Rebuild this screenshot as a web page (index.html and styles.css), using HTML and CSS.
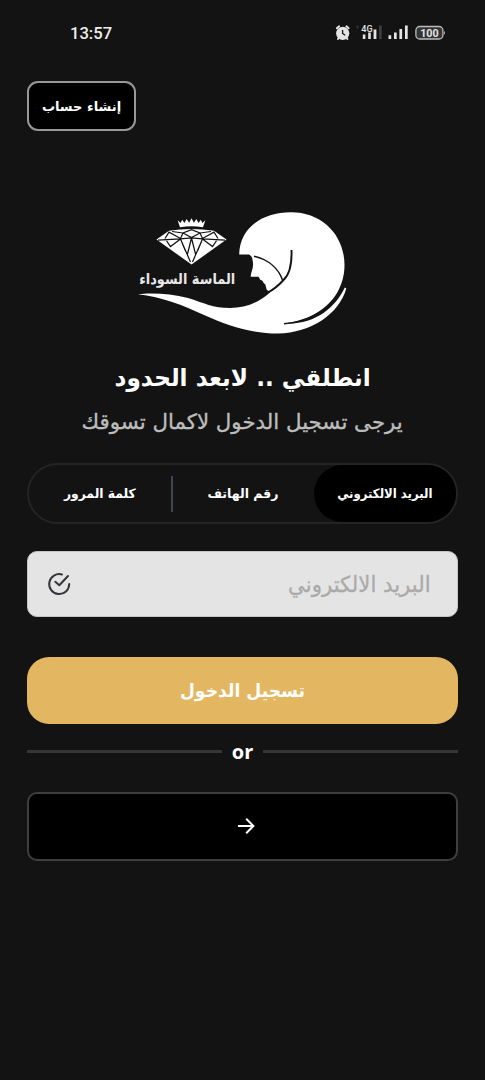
FILE: index.html
```html
<!DOCTYPE html>
<html lang="ar">
<head>
<meta charset="utf-8">
<title>تسجيل الدخول</title>
<link rel="stylesheet" href="styles.css">
</head>
<body>
<div class="screen">
  <header class="status">
    <span class="clock">13:57</span>
    <svg class="status-icons" width="112" height="20" viewBox="334 23 112 20" fill="#e4e4e4">
      <circle cx="342.700" cy="33.300" r="6.600"/>
      <path d="M336.900 28.300l2.200-2M348.600 28.300l-2.200-2M338.600 38.200l-.6.800M346.800 38.200l.6.800" stroke="#e4e4e4" stroke-width="2" stroke-linecap="round"/>
      <path d="M342.600 30v3.500l2.600 1.800" fill="none" stroke="#141414" stroke-width="1.300"/>
      <path d="M356.500 25.500h2v3h-2z" fill="#333"/>
      <text class="net" x="361.300" y="31.800">4G</text>
      <path d="M362.800 34.500h2.600V39h-2.600zM368.200 32.500h2.600V39h-2.600zM373.600 29.500h2.800V39h-2.800z"/>
      <path d="M379 25.500h2.800V39H379z" fill="#3c3c3c"/>
      <path d="M388.500 35.300h2.700V39h-2.700zM394 32.500h2.700V39H394zM399.400 29h2.700v10h-2.700zM405 25.500h2.700V39H405z"/>
      <rect x="415.900" y="26.500" width="27" height="12.500" rx="3.800" fill="#343434" stroke="#bcbcbc" stroke-width="1.300"/>
      <path d="M444 30.400q1.600 2.300 0 4.600z"/>
      <text class="batt" x="420.200" y="36.600" textLength="18.500" lengthAdjust="spacingAndGlyphs">100</text>
    </svg>
  </header>

  <button class="signup"><span class="t-signup">إنشاء حساب</span></button>

  <svg class="logo" width="220" height="140" viewBox="130 200 220 140">
    <g fill="#fff">
      <path d="M239.200 254.500C239.500 229 261 212.300 291 212.300C323 212.300 344.500 236 344.500 265C344.500 276 341.500 285 337 293C328 308 311 320 284 323.500C315 325 335 308 344.800 287.500L346.300 288.500C339 314 311 333 278 333.500C251 333.500 228 326 204 315C183 305 162 297 138 294.200C151 292.500 171 293.500 188 298C204 303 213 308 230 308C245 308 258 303 270 292.500L268 290.500C266 290 266.500 287 265 284C262.500 283 264 280.500 260.500 280L258.500 276.800L250.700 276.800C250.500 272 254.500 268 252.500 260C252.500 257 250.500 254.500 248 254.500Z"/>
      <path d="M177.600 220.300l3 2.600 1.600-3.200 2.200 3.200 2.300-3.900 2.400 3.700 2.400-4.500 2.400 4.500 2.400-3.700 2.300 3.900 2.200-3.200 1.600 3.200 3-2.600-2.400 7q-11.500-2-23 0z"/>
      <path d="M169 230.700Q191 227.500 214 230.700L226.500 239.500 191.500 264.500 156.500 239.500Z"/>
    </g>
    <g fill="none" stroke="#131313">
      <path d="M254 256.300C270 260 279 270 282.500 280" stroke-width="1.500"/>
      <path d="M291.500 250C292 265 289 275 283.500 280C279 285 273 290 267 293" stroke-width="1.900"/>
      <path d="M284 323.800C310 322.500 330 309 342 289" stroke-width="1.500"/>
      <path d="M158 240.200l22.500-1.300 11-1 11 1 22.500 1.300M165 238.500l4-6.300 11.500 6.300 2.500-5.500 8.500-3.300 8.500 3.300 2.500 5.500 11.500-6.300 4 6.300M183 233l8.500 4.500 8.500-4.500M172 231.500l11 1.500M211 231.500l-11 1.500M180.500 239l10 23M202.500 239l-10 23M187.500 254l4-16 4 16M166 240l4.500 6.500 10-7.500 5 12M217 240l-4.500 6.500-10-7.500-5 12" stroke-width="1.250"/>
    </g>
    <text class="brand" x="187.200" y="283.500" text-anchor="middle" direction="rtl" textLength="96" lengthAdjust="spacingAndGlyphs">الماسة السوداء</text>
  </svg>

  <h1 class="title"><span class="t-title">انطلقي .. لابعد الحدود</span></h1>
  <p class="subtitle"><span class="t-subtitle">يرجى تسجيل الدخول لاكمال تسوقك</span></p>

  <nav class="tabs">
    <span class="tab active"><span class="t-email">البريد الالكتروني</span></span>
    <span class="tab"><span class="t-phone">رقم الهاتف</span></span>
    <i class="divider"></i>
    <span class="tab"><span class="t-pass">كلمة المرور</span></span>
  </nav>

  <div class="field">
    <span class="placeholder"><span class="t-field">البريد الالكتروني</span></span>
    <svg width="24" height="24" viewBox="0 0 24 24" fill="none" stroke="#35353b" stroke-width="2" stroke-linecap="round" stroke-linejoin="round">
      <path d="M15 2.500A10 10 0 1 0 22.200 12"/>
      <path d="M8.300 9.800l4 3.400L21 4"/>
    </svg>
  </div>

  <button class="login"><span class="t-login">تسجيل الدخول</span></button>
  <div class="or"><i></i><span>or</span><i></i></div>
  <button class="next">
    <svg width="18" height="18" viewBox="0 0 18 18" fill="none" stroke="#fff" stroke-width="2"><path d="M1 9h15M9.200 1.800L16.400 9l-7.200 7.200"/></svg>
  </button>
</div>
</body>
</html>
```
FILE: styles.css
```css
* { box-sizing: border-box; }
body { margin: 0; background: #131313; }
.screen {
  width: 485px; height: 1080px; padding: 0 27px;
  display: flex; flex-direction: column;
  color: #fff; background: #131313;
  font-family: "DejaVu Sans", sans-serif;
  direction: rtl; overflow: hidden;
}
button { font: inherit; color: inherit; padding: 0; display: flex; align-items: center; justify-content: center; }
span { white-space: nowrap; }
.screen span[class^="t-"] { display: inline-block; }
.t-title { transform: scaleX(.966); }
.t-subtitle { transform: scaleX(1.016); }
.t-email { transform: scaleX(.9); }
.t-phone { transform: translateX(-1px) scaleX(.96); }
.t-pass { transform: scaleX(.95); }
.t-field { transform: translateX(1px) scaleX(.966); transform-origin: right; }
.t-login { transform: scaleX(.955); }

.status { direction: ltr; height: 66px; padding: 0 12px 0 43px; display: flex; align-items: center; justify-content: space-between; }
.clock { font: 500 16.6px Roboto, sans-serif; color: #eee; }
.net { font: 500 9px Roboto, sans-serif; }
.batt { font: 700 10.5px Roboto, sans-serif; }

.signup { align-self: flex-end; width: 109px; height: 50px; margin-top: 15px; border: 2px solid #989898; border-radius: 11px; background: #000; font-size: 13px; font-weight: 700; }
.logo { display: block; margin: 69px 108px 0 auto; flex: none; }
.brand { font: 700 15px "DejaVu Sans", sans-serif; fill: #e8e8e8; }

.title { margin: 16px 0 0; height: 44px; line-height: 44px; font-size: 24px; font-weight: 700; display: flex; justify-content: center; }
.subtitle { margin: 0; height: 44px; line-height: 44px; font-size: 21px; color: #bdbdbd; -webkit-text-stroke: .35px #bdbdbd; display: flex; justify-content: center; }

.tabs { margin-top: 19px; height: 61px; flex: none; display: flex; align-items: center; border: 2px solid #242424; border-radius: 31px; }
.tab { flex: 1; height: 57px; display: flex; align-items: center; justify-content: center; font-size: 13px; font-weight: 700; }
.active { background: #000; border-radius: 29px; }
.divider { width: 2px; height: 36px; background: #3e4854; }

.field { margin-top: 27px; height: 66px; flex: none; padding: 0 27px 0 19px; display: flex; align-items: center; justify-content: space-between; border: 1px solid #c4c4c4; border-radius: 10px; background: #e4e4e4; }
.placeholder { font-size: 22px; color: #aaa; -webkit-text-stroke: .3px #aaa; }

.login { margin-top: 40px; height: 67px; flex: none; border: 0; border-radius: 22px; background: #e3b662; font-size: 18px; font-weight: 700; }
.or { height: 54px; flex: none; display: flex; align-items: center; gap: 10px; font: 700 20px "Open Sans", sans-serif; direction: ltr; }
.or i { flex: 1; height: 3px; background: #363636; }
.next { margin-top: 14px; padding: 0 5px 1px 0; direction: ltr; padding-right: 0; padding-left: 6px; height: 69px; flex: none; border: 2px solid #3f3f3f; border-radius: 10px; background: #000; }
```
